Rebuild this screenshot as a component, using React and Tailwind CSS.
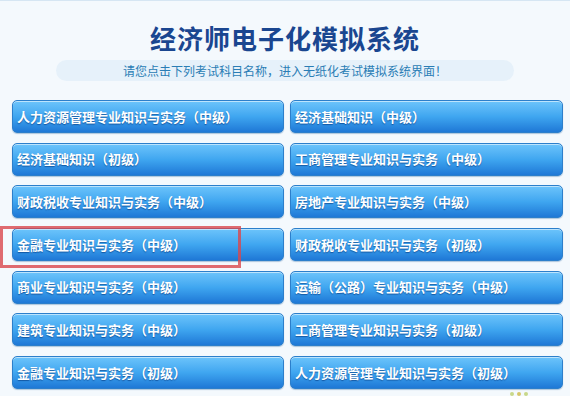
import React from 'react';

const subjects = [
  '人力资源管理专业知识与实务（中级）',
  '经济基础知识（中级）',
  '经济基础知识（初级）',
  '工商管理专业知识与实务（中级）',
  '财政税收专业知识与实务（中级）',
  '房地产专业知识与实务（中级）',
  '金融专业知识与实务（中级）',
  '财政税收专业知识与实务（初级）',
  '商业专业知识与实务（中级）',
  '运输（公路）专业知识与实务（中级）',
  '建筑专业知识与实务（中级）',
  '工商管理专业知识与实务（初级）',
  '金融专业知识与实务（初级）',
  '人力资源管理专业知识与实务（初级）',
];

const font = { fontFamily: '"Noto Sans CJK SC", "Liberation Sans", sans-serif' };

const SubjectButton = ({ label }) => (
  <button
    className="h-[33px] flex items-center pl-[4px] rounded-[5px] border border-[#2c7fcb] bg-gradient-to-b from-[#6cc4fb] via-[#3fa6f0] to-[#1f78d6] shadow-[inset_0_1px_0_rgba(255,255,255,0.55),0_1px_1px_rgba(40,100,160,0.35)] text-white text-[13px] font-bold [text-shadow:0_1px_1px_rgba(0,50,120,0.6)] text-left"
  >
    {label}
  </button>
);

export default function App() {
  return (
    <div className="relative w-[570px] h-[396px] overflow-hidden bg-[#f4f9fd] border-t border-[#d6e6f3]" style={font}>
      <h1 className="pt-[19px] text-center text-[26px] leading-[36px] font-bold text-[#1a4690] tracking-[1px]">
        经济师电子化模拟系统
      </h1>
      <div className="mx-auto mt-[4px] w-[458px] h-[21px] rounded-full bg-[#e6f1fa] flex items-center justify-center text-[12px] text-[#2a7db5]">
        请您点击下列考试科目名称，进入无纸化考试模拟系统界面！
      </div>

      <div className="mt-[19px] ml-[12px] w-[551px] grid grid-cols-[272px_273px] gap-x-[6px] gap-y-[9.67px]">
        {subjects.map((s) => (
          <SubjectButton key={s} label={s} />
        ))}
      </div>

      {/* red highlight over the selected subject */}
      <div className="absolute left-0 top-[225px] w-[241px] h-[42px] border-[3px] border-[#d9474c]/80 pointer-events-none" />

      <div className="absolute left-[510px] top-[391px] flex gap-[3px]">
        <span className="w-[4px] h-[4px] rounded-full bg-[#c8d88a]" />
        <span className="w-[4px] h-[4px] rounded-full bg-[#d6c66a]" />
        <span className="w-[4px] h-[4px] rounded-full bg-[#c8d88a]" />
      </div>
    </div>
  );
}
